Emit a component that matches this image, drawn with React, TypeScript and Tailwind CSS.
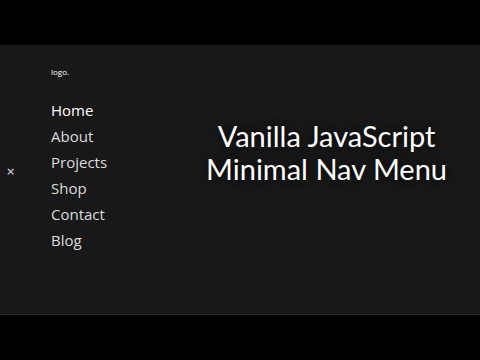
import React from "react";

export default function App() {
  const items = ["Home", "About", "Projects", "Shop", "Contact", "Blog"];
  return (
    <div className="w-[480px] h-[360px] bg-black flex flex-col justify-center">
      <div className="h-[270px] bg-[#181818] border-b border-[#2a2a2a] flex relative">
        <div className="absolute left-[6px] top-[121px] text-[#e0e0e0] text-[11px] leading-none" style={{ fontFamily: "'DejaVu Sans', sans-serif" }}>×</div>
        <div className="pl-[51px] pt-[22px] flex flex-col" style={{ fontFamily: "'Open Sans', sans-serif" }}>
          <div className="text-[8px] text-white leading-[10px]">logo.</div>
          <div className="mt-[22px] flex flex-col gap-[4px]">
            {items.map((t, i) => (
              <div key={t} className={`text-[15px] leading-[22px] ${i === 0 ? "text-white" : "text-[#dcdcdc]"}`}>{t}</div>
            ))}
          </div>
        </div>
        <div className="flex-1 flex flex-col items-center justify-center pl-[66px] pb-[56px] text-white text-[29px] leading-[33px]" style={{ fontFamily: "Lato, sans-serif", textShadow: "0 0 10px rgba(0,0,0,0.9)" }}>
          <div>Vanilla JavaScript</div>
          <div>Minimal Nav Menu</div>
        </div>
      </div>
    </div>
  );
}
